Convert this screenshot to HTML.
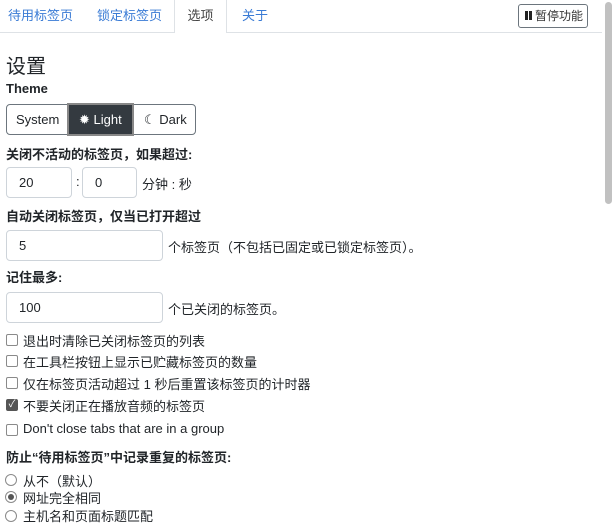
<!DOCTYPE html>
<html><head><meta charset="utf-8"><style>
*{box-sizing:border-box}
body{margin:0;width:614px;height:524px;overflow:hidden;background:#fff;font-family:"Liberation Sans","Noto Sans CJK SC",sans-serif;color:#212529;font-size:13px;position:relative}
.a{position:absolute;white-space:nowrap}
.tab{position:absolute;top:0;height:32px;line-height:32px;color:#3a7bd5;font-size:13px}
.inp{position:absolute;border:1px solid #ced4da;border-radius:4px;height:31px;line-height:29px;padding-left:12px;font-size:13px}
.cb{position:absolute;left:6px;width:12px;height:12px;border:1px solid #8a8a8a;border-radius:2px}
.rd{position:absolute;left:5px;width:12px;height:12px;border:1px solid #8a8a8a;border-radius:50%}
</style></head><body>
<div class="a" style="left:0;top:32px;width:602px;border-top:1px solid #dee2e6"></div>
<div class="tab" style="left:8px">待用标签页</div>
<div class="tab" style="left:97px">锁定标签页</div>
<div class="a" style="left:174px;top:0;width:53px;height:33px;background:#fff;border:1px solid #dee2e6;border-bottom:none;border-top:none;line-height:32px;text-align:center;color:#444">选项</div>
<div class="tab" style="left:242px">关于</div>
<div class="a" style="left:518px;top:4px;width:70px;height:24px;border:1px solid #6c757d;border-radius:3px;line-height:22px;font-size:12px;padding-left:6px;color:#333"><span style="display:inline-block;width:3px;height:9px;background:#222;margin-right:1px"></span><span style="display:inline-block;width:3px;height:9px;background:#222;margin-right:3px"></span>暂停功能</div>
<div class="a" style="left:605px;top:2px;width:7px;height:202px;background:#c1c1c1;border-radius:4px"></div>
<div class="a" style="left:6px;top:50px;font-size:20px">设置</div>
<div class="a" style="left:6px;top:81px;font-weight:bold;font-size:13px">Theme</div>
<div class="a" style="left:6px;top:104px;width:190px;height:31px;border:1px solid #6c757d;border-radius:4px"></div>
<div class="a" style="left:16px;top:104px;line-height:31px">System</div>
<div class="a" style="left:67px;top:103px;width:67px;height:33px;background:#343a40;border:2px solid #888;color:#fff;line-height:29px;padding-left:10px">✹ Light</div>
<div class="a" style="left:144px;top:104px;line-height:31px">☾ Dark</div>
<div class="a" style="left:6px;top:144px;font-weight:bold">关闭不活动的标签页，如果超过:</div>
<div class="inp" style="left:6px;top:167px;width:66px">20</div>
<div class="a" style="left:76px;top:174px">:</div>
<div class="inp" style="left:82px;top:167px;width:55px">0</div>
<div class="a" style="left:142px;top:174px">分钟 : 秒</div>
<div class="a" style="left:6px;top:206px;font-weight:bold">自动关闭标签页，仅当已打开超过</div>
<div class="inp" style="left:6px;top:230px;width:157px">5</div>
<div class="a" style="left:168px;top:237px">个标签页（不包括已固定或已锁定标签页）。</div>
<div class="a" style="left:6px;top:267px;font-weight:bold">记住最多:</div>
<div class="inp" style="left:6px;top:292px;width:157px">100</div>
<div class="a" style="left:168px;top:299px">个已关闭的标签页。</div>
<div class="cb" style="top:334px"></div><div class="a" style="left:23px;top:331px">退出时清除已关闭标签页的列表</div>
<div class="cb" style="top:355px"></div><div class="a" style="left:23px;top:352px">在工具栏按钮上显示已贮藏标签页的数量</div>
<div class="cb" style="top:377px"></div><div class="a" style="left:23px;top:374px">仅在标签页活动超过 1 秒后重置该标签页的计时器</div>
<div class="cb" style="top:399px;background:#555;border-color:#555;color:#fff;font-size:10px;line-height:10px;text-align:center">✓</div><div class="a" style="left:23px;top:396px">不要关闭正在播放音频的标签页</div>
<div class="cb" style="top:424px"></div><div class="a" style="left:23px;top:421px">Don't close tabs that are in a group</div>
<div class="a" style="left:6px;top:447px;font-weight:bold">防止“待用标签页”中记录重复的标签页:</div>
<div class="rd" style="top:474px"></div><div class="a" style="left:23px;top:471px">从不（默认）</div>
<div class="rd" style="top:491px"><div style="margin:2px;width:6px;height:6px;border-radius:50%;background:#555"></div></div><div class="a" style="left:23px;top:488px">网址完全相同</div>
<div class="rd" style="top:510px"></div><div class="a" style="left:23px;top:506px">主机名和页面标题匹配</div>
</body></html>
